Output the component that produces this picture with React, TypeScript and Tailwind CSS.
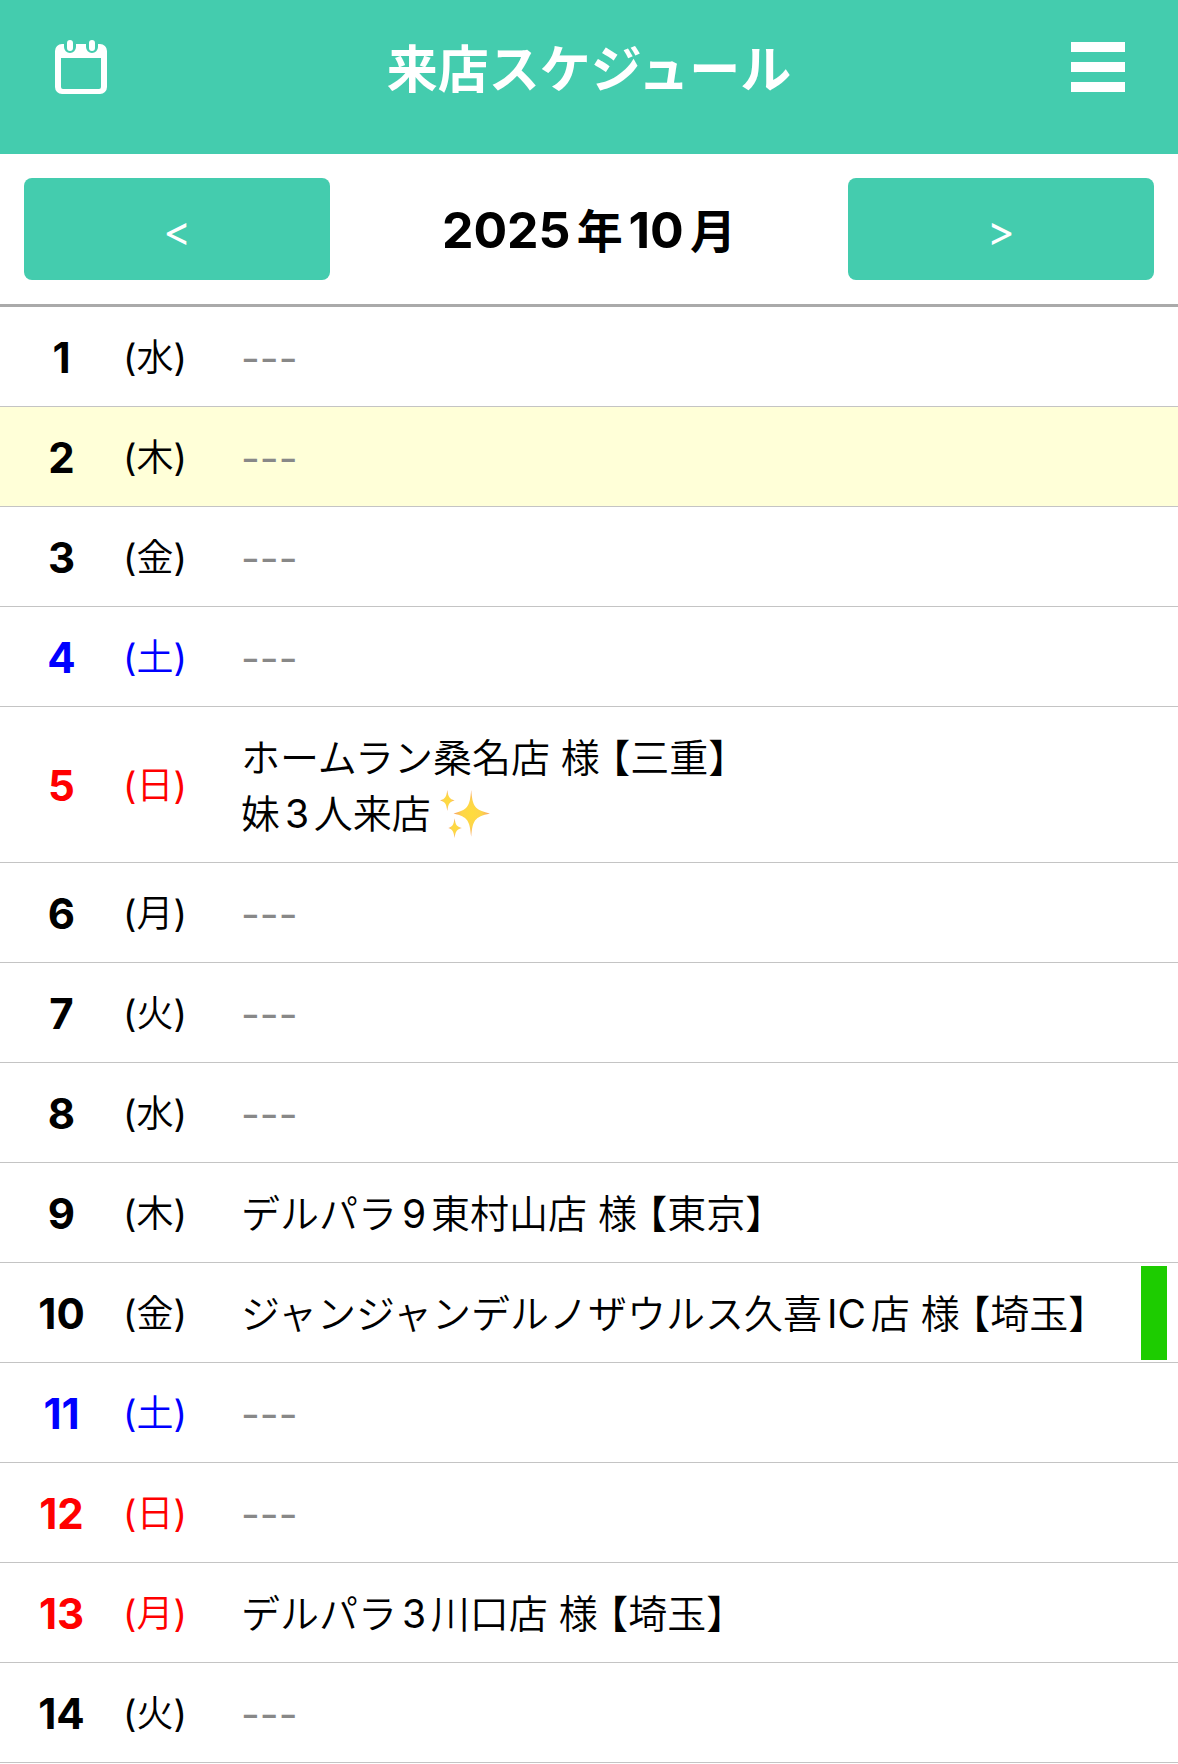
import { useState } from 'react'
import { clsx } from 'clsx'

type Kind = 'weekday' | 'saturday' | 'holiday'

interface Day {
  date: number
  wday: string
  kind: Kind
  lines?: string[]
  sparkle?: boolean
  today?: boolean
  marker?: boolean
}

const days: Day[] = [
  { date: 1,  wday: '水', kind: 'weekday' },
  { date: 2,  wday: '木', kind: 'weekday', today: true },
  { date: 3,  wday: '金', kind: 'weekday' },
  { date: 4,  wday: '土', kind: 'saturday' },
  { date: 5,  wday: '日', kind: 'holiday', lines: ['ホームラン桑名店 様 【三重】', '妹3人来店'], sparkle: true },
  { date: 6,  wday: '月', kind: 'weekday' },
  { date: 7,  wday: '火', kind: 'weekday' },
  { date: 8,  wday: '水', kind: 'weekday' },
  { date: 9,  wday: '木', kind: 'weekday', lines: ['デルパラ9東村山店 様 【東京】'] },
  { date: 10, wday: '金', kind: 'weekday', lines: ['ジャンジャンデルノザウルス久喜IC店 様 【埼玉】'], marker: true },
  { date: 11, wday: '土', kind: 'saturday' },
  { date: 12, wday: '日', kind: 'holiday' },
  { date: 13, wday: '月', kind: 'holiday', lines: ['デルパラ3川口店 様 【埼玉】'] },
  { date: 14, wday: '火', kind: 'weekday' },
]

const kindColor: Record<Kind, string> = {
  weekday: 'text-black',
  saturday: 'text-[#0000ff]',
  holiday: 'text-[#ff0000]',
}

function CalendarIcon() {
  return (
    <svg width="54" height="54" viewBox="-1 0 54 54" aria-hidden="true">
      <path
        fill="#fff"
        fillRule="evenodd"
        d="M8 4h38a7 7 0 0 1 7 7v36a7 7 0 0 1-7 7H8a7 7 0 0 1-7-7V11a7 7 0 0 1 7-7ZM7 18v29a2 2 0 0 0 2 2h36a2 2 0 0 0 2-2V18Z"
      />
      {/* rings, each with a gap cut round it */}
      <path stroke="#44ccae" strokeWidth="12" strokeLinecap="round" d="M16 0v7M38 0v7" />
      <path stroke="#fff" strokeWidth="6" strokeLinecap="round" d="M16 3v5M38 3v5" />
    </svg>
  )
}

function Sparkles() {
  return (
    <svg className="mb-[7px] ml-2 inline-block align-middle" width="54" height="50" viewBox="0 0 52 48" role="img" aria-label="✨">
      <defs>
        <radialGradient id="spark">
          <stop offset="0" stopColor="#ffdc3c" />
          <stop offset="0.55" stopColor="#fdd54a" />
          <stop offset="1" stopColor="#f7a06a" />
        </radialGradient>
      </defs>
      <g fill="url(#spark)">
        <path d="M31 1C32.500 17 34 20 49 23.500C34 27 32.500 30 31 46C29.500 30 28 27 14 23.500C28 20 29.500 17 31 1Z" />
        <path d="M8 1C9 8 10 9.500 15 11C10 12.500 9 14 8 21C7 14 6 12.500 1 11C6 9.500 7 8 8 1Z" />
        <path d="M15 28C16 34.500 17 36 22 37.500C17 39 16 40.500 15 47C14 40.500 13 39 9 37.500C13 36 14 34.500 15 28Z" />
      </g>
    </svg>
  )
}

function DayRow({ day }: { day: Day }) {
  const cell = 'border-b border-[#c4c4c4] pt-[23px] pb-5'
  const thin = "font-[Inter,'Noto_Sans_CJK_JP_DemiLight','Noto_Sans_CJK_JP',sans-serif]"

  return (
    <tr className={clsx(day.today && 'bg-[#ffffd8]')}>
      <th scope="row" className={clsx(cell, kindColor[day.kind], 'w-[123px] text-center text-[42px] leading-[56px] font-bold')}>
        {day.date}
      </th>
      <td className={clsx(cell, thin, kindColor[day.kind], 'w-[118px] text-[37px] leading-[56px]')}>({day.wday})</td>
      <td className={clsx(cell, thin, 'leading-[56px]', day.lines ? 'text-[39px]' : 'text-[41px] text-[#888]')}>
        {day.lines
          ? day.lines.map((line, i) => (
              <p key={line} className="h-[56px] whitespace-nowrap">
                {line}
                {day.sparkle && i === day.lines!.length - 1 && <Sparkles />}
              </p>
            ))
          : '---'}
      </td>
      <td className="w-[37px] border-b border-[#c4c4c4] pr-[11px]">
        {day.marker && <div className="h-[94px] bg-[#1dcc00]" />}
      </td>
    </tr>
  )
}

export default function App() {
  const [month, setMonth] = useState(10)
  const navButton = 'h-[102px] w-[26vw] rounded-lg bg-[#44ccae] pt-[2px] text-[42px] text-white'

  return (
    <div
      lang="ja"
      className="min-h-screen bg-white font-[Inter,'Noto_Sans_CJK_JP',sans-serif] text-black [font-feature-settings:'halt'] [text-autospace:normal]"
    >
      <header className="flex items-start justify-between bg-[#44ccae] px-[53px] pt-10 pb-14 text-white">
        <button type="button" aria-label="カレンダー">
          <CalendarIcon />
        </button>
        <h1 className="pt-[2px] text-[51px] leading-[56px] font-bold">来店スケジュール</h1>
        <button type="button" aria-label="メニュー" className="flex w-[54px] flex-col gap-[10px] pt-[2px]">
          <span className="h-[10px] w-full bg-white" />
          <span className="h-[10px] w-full bg-white" />
          <span className="h-[10px] w-full bg-white" />
        </button>
      </header>

      <nav className="flex items-center justify-between border-b-[3px] border-[#aaa] p-6">
        <button type="button" className={navButton} onClick={() => setMonth(m => Math.max(1, m - 1))}>
          &lt;
        </button>
        <h2 className="pt-[2px] text-[50px] leading-[56px] font-bold">
          2025<span className="text-[46px]">年</span>{month}<span className="text-[46px]">月</span>
        </h2>
        <button type="button" className={navButton} onClick={() => setMonth(m => Math.min(12, m + 1))}>
          &gt;
        </button>
      </nav>

      <table className="w-full table-fixed border-separate border-spacing-0 text-left">
        <tbody>
          {days.map(day => (
            <DayRow key={day.date} day={day} />
          ))}
        </tbody>
      </table>
    </div>
  )
}
